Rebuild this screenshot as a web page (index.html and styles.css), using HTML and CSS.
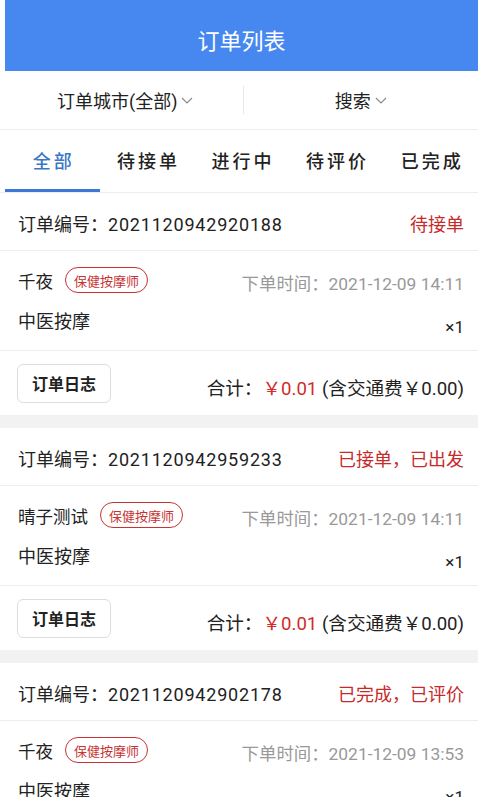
FILE: index.html
```html
<!DOCTYPE html>
<html lang="zh-CN">
<head>
    <meta charset="UTF-8">
    <meta name="viewport" content="width=device-width, initial-scale=1.0">
    <title>订单列表</title>
    <link rel="stylesheet" href="styles.css">
</head>
<body>
    <div class="header">订单列表</div>

    <div class="filter-bar">
        <div class="filter-item">订单城市(全部)<svg class="chevron" viewBox="0 0 12 7"><polyline points="1,1 6,6 11,1"/></svg></div>
        <div class="filter-sep"></div>
        <div class="filter-item">搜索<svg class="chevron" viewBox="0 0 12 7"><polyline points="1,1 6,6 11,1"/></svg></div>
    </div>

    <div class="tabs">
        <div class="tab active">全部</div>
        <div class="tab">待接单</div>
        <div class="tab">进行中</div>
        <div class="tab">待评价</div>
        <div class="tab">已完成</div>
    </div>

    <div class="order-list">
        <div class="order-card">
            <div class="order-head">
                <span class="order-no">订单编号：<span class="num">2021120942920188</span></span>
                <span class="order-status">待接单</span>
            </div>
            <div class="order-info">
                <div class="info-row">
                    <div class="person">千夜<span class="badge">保健按摩师</span></div>
                    <div class="order-time">下单时间：2021-12-09 14:11</div>
                </div>
                <div class="service-row">
                    <span class="service">中医按摩</span>
                    <span class="qty">×1</span>
                </div>
            </div>
            <div class="order-foot">
                <button class="log-btn">订单日志</button>
                <div class="total">合计：<span class="price">￥0.01</span> (含交通费￥0.00)</div>
            </div>
        </div>

        <div class="order-card">
            <div class="order-head">
                <span class="order-no">订单编号：<span class="num">2021120942959233</span></span>
                <span class="order-status">已接单，已出发</span>
            </div>
            <div class="order-info">
                <div class="info-row">
                    <div class="person">晴子测试<span class="badge">保健按摩师</span></div>
                    <div class="order-time">下单时间：2021-12-09 14:11</div>
                </div>
                <div class="service-row">
                    <span class="service">中医按摩</span>
                    <span class="qty">×1</span>
                </div>
            </div>
            <div class="order-foot">
                <button class="log-btn">订单日志</button>
                <div class="total">合计：<span class="price">￥0.01</span> (含交通费￥0.00)</div>
            </div>
        </div>

        <div class="order-card">
            <div class="order-head">
                <span class="order-no">订单编号：<span class="num">2021120942902178</span></span>
                <span class="order-status">已完成，已评价</span>
            </div>
            <div class="order-info">
                <div class="info-row">
                    <div class="person">千夜<span class="badge">保健按摩师</span></div>
                    <div class="order-time">下单时间：2021-12-09 13:53</div>
                </div>
                <div class="service-row">
                    <span class="service">中医按摩</span>
                    <span class="qty">×1</span>
                </div>
            </div>
            <div class="order-foot">
                <button class="log-btn">订单日志</button>
                <div class="total">合计：<span class="price">￥0.01</span> (含交通费￥0.00)</div>
            </div>
        </div>
    </div>
</body>
</html>
```

FILE: styles.css
```css
body {
    margin: 0;
    background-color: #fff;
    color: #222;
    font-family: Roboto, "Noto Sans CJK SC", sans-serif;
    overflow: hidden;
}
.header {
    height: 71px;
    margin-left: 5px;
    padding-top: 7px;
    box-sizing: border-box;
    background-color: #4687f0;
    color: #fff;
    font-size: 22px;
    display: flex;
    align-items: center;
    justify-content: center;
}
.filter-bar {
    height: 58px;
    padding-left: 8px;
    display: flex;
    align-items: center;
    border-bottom: 1px solid #eee;
}
.filter-item {
    flex: 1;
    display: flex;
    align-items: center;
    justify-content: center;
    font-size: 18px;
    color: #222;
}
.filter-sep {
    width: 1px;
    height: 28px;
    background-color: #e8e8e8;
}
.chevron {
    width: 12px;
    height: 7px;
    margin-left: 4px;
    margin-top: 1px;
    fill: none;
    stroke: #888;
    stroke-width: 1.1;
}
.tabs {
    height: 62px;
    padding-left: 5px;
    display: flex;
    border-bottom: 1px solid #eee;
}
.tab {
    flex: 1;
    display: flex;
    align-items: center;
    justify-content: center;
    padding-top: 1px;
    padding-left: 3px;
    font-size: 18px;
    font-weight: 500;
    letter-spacing: 3px;
    border-bottom: 3px solid transparent;
}
.tab.active {
    color: #3b76c6;
    border-bottom-color: #3b78d8;
}
.order-card {
    border-bottom: 13px solid #f2f2f2;
}
.order-head {
    height: 58px;
    padding: 2px 14px 0 18px;
    box-sizing: border-box;
    display: flex;
    align-items: center;
    justify-content: space-between;
    border-bottom: 1px solid #eee;
    font-size: 18px;
}
.num {
    letter-spacing: 0.8px;
}
.order-status {
    color: #c62a2a;
}
.order-info {
    padding: 14px 14px 10px 18px;
    border-bottom: 1px solid #eee;
}
.info-row {
    height: 30px;
    display: flex;
    align-items: center;
    justify-content: space-between;
}
.person {
    display: flex;
    align-items: center;
    font-size: 17.5px;
}
.badge {
    margin-left: 12px;
    height: 26px;
    padding: 0 8px;
    box-sizing: border-box;
    display: flex;
    align-items: center;
    border: 1.5px solid #c73333;
    border-radius: 13px;
    color: #c73333;
    font-size: 13px;
}
.order-time {
    color: #999;
    font-size: 17.4px;
    padding-top: 5px;
}
.service-row {
    margin-top: 14px;
    display: flex;
    justify-content: space-between;
    align-items: flex-start;
}
.service {
    font-size: 18px;
    line-height: 26px;
}
.qty {
    margin-top: 5px;
    font-size: 17px;
    line-height: 26px;
}
.order-foot {
    height: 64px;
    padding: 0 14px 0 17px;
    box-sizing: border-box;
    display: flex;
    align-items: center;
    justify-content: space-between;
}
.log-btn {
    width: 94px;
    height: 39px;
    background-color: #fff;
    border: 1px solid #ddd;
    border-radius: 6px;
    font-family: Roboto, "Noto Sans CJK SC", sans-serif;
    font-size: 16px;
    font-weight: bold;
    color: #222;
}
.total {
    padding-top: 6px;
    font-size: 18.6px;
}
.price {
    color: #d02b2b;
}
```
